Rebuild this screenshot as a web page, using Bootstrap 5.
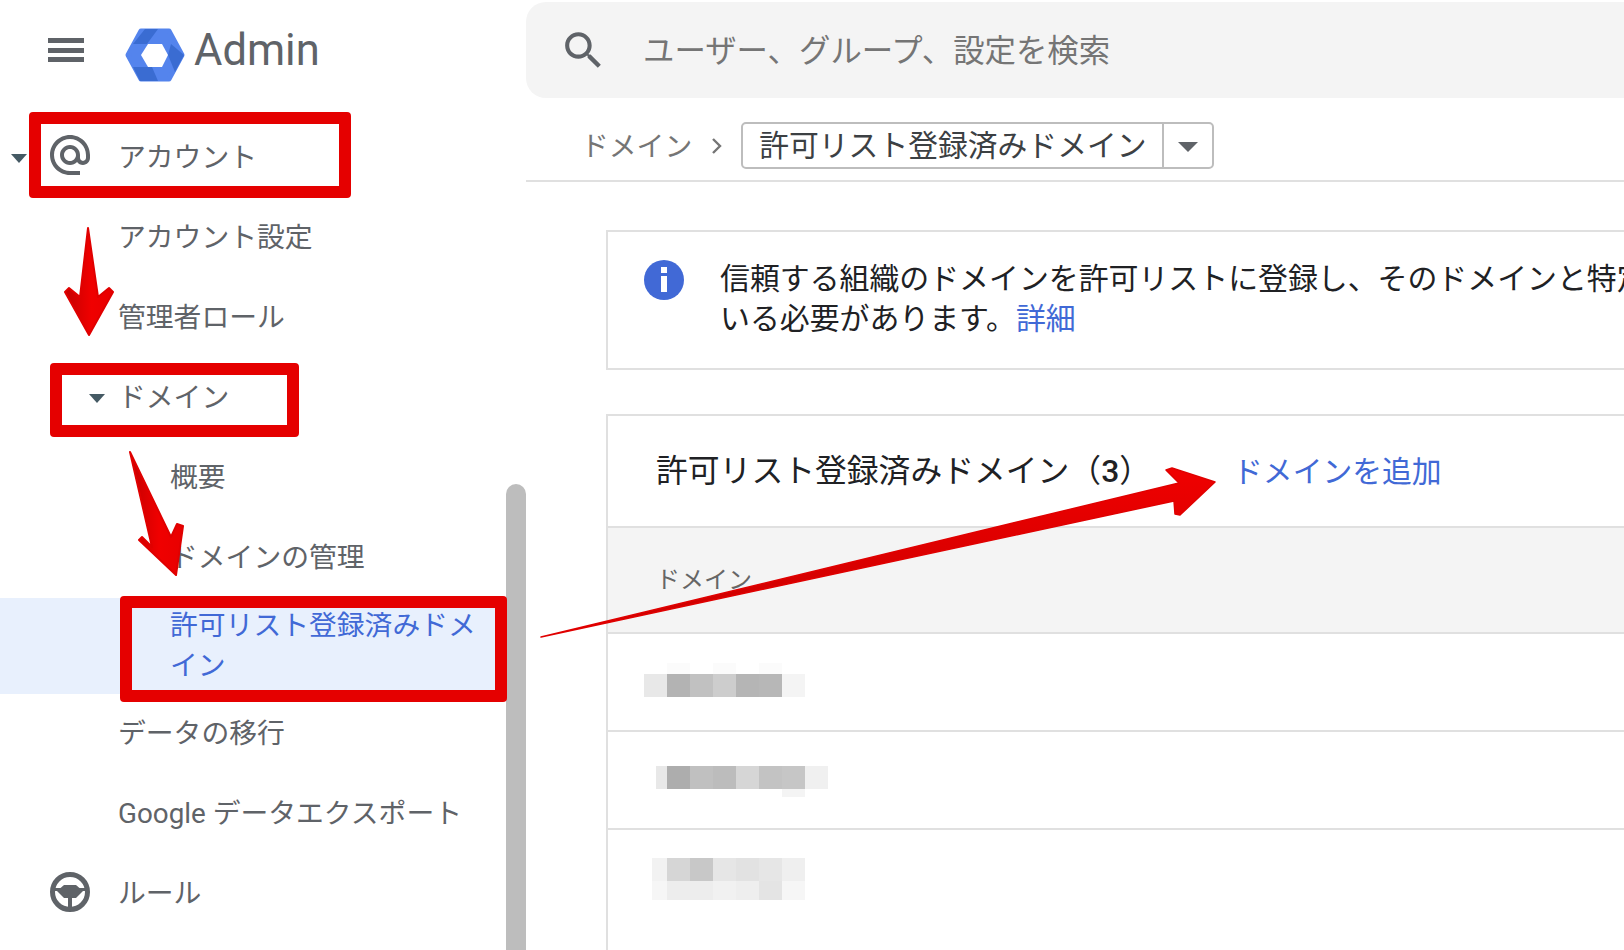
<!DOCTYPE html>
<html lang="ja">
<head>
<meta charset="utf-8">
<title>Admin</title>
<link href="https://cdn.jsdelivr.net/npm/bootstrap@5.3.0/dist/css/bootstrap.min.css" rel="stylesheet">
<style>
html,body{height:100%;overflow:hidden;background:#fff}
body{font-family:Roboto,"Noto Sans CJK JP",sans-serif;color:#202124}
.shell{width:1624px;height:950px;overflow:hidden}
.side{width:526px;flex:none;height:950px}
.brand{height:116px;padding-left:48px;padding-bottom:14px}
.burger{width:36px;height:24px;display:flex;flex-direction:column;justify-content:space-between;margin-right:41px;margin-top:-2px}
.burger i{display:block;height:5px;background:#5f6368}
.brand-logo{margin-top:8px}
.brand-name{font-size:43.5px;color:#5f6368;line-height:1;margin-left:9px}
.menu-row{height:80px;font-size:27.8px;color:#5f6368;display:flex;align-items:center;padding-left:118px;padding-top:3px;white-space:nowrap}
.menu-row.sub{padding-left:170px}
.menu-row.gapped{height:82px;padding-bottom:2px}
.menu-row.short{height:78px;padding-bottom:2px}
.menu-row.active-row{height:96px;background:#e8f0fd;color:#4169d6;line-height:40px;white-space:normal;padding-right:30px;padding-top:0;padding-bottom:1px}
.row-ico{width:48px;height:48px;position:absolute;left:46px;fill:#5f6368}
.caret-a{position:absolute;width:0;height:0;border-left:8.5px solid transparent;border-right:8.5px solid transparent;border-top:9px solid #455a64}
.thumb{position:absolute;left:506px;top:484px;width:20px;height:466px;background:#bdbdbd;border-radius:10px 10px 0 0}
.mainp{width:1098px;flex:none}
.searchbar{height:96px;margin-top:2px;background:#f4f4f4;border-radius:20px 0 0 20px;padding-left:33px;color:#757575;font-size:31.4px}
.search-text{margin-top:3px}
.search-ico{width:49px;height:49px;fill:#5f6368;margin-right:35px;flex:none}
.crumbbar{height:84px;border-bottom:2px solid #e0e0e0;padding:12px 0 0 55px;font-size:27.8px;color:#757575}
.crumb-text{margin-top:3px}
.chev{width:12px;height:18px;margin:2px 18px 0 19px;flex:none}
.picker{height:47px;border:2px solid #bdbdbd;border-radius:5px;color:#3c4043;font-size:29.8px;display:flex;align-items:center;width:473px}
.picker-label{width:421px;padding:2px 0 0 16px;height:100%;display:flex;align-items:center;border-right:2px solid #bdbdbd;white-space:nowrap}
.picker-caret{width:0;height:0;border-left:10px solid transparent;border-right:10px solid transparent;border-top:10px solid #5f6368;margin:4px 0 0 14px}
.panel{margin-left:80px;width:1100px;border:2px solid #e0e0e0;border-radius:0;background:#fff}
.info-panel{margin-top:48px;height:140px;display:flex;padding:28px 0 0 36px}
.info-dot{width:40px;height:40px;border-radius:50%;background:#4169d6;flex:none;margin-right:36px}
.info-text{font-size:29.9px;line-height:40px;color:#202124;white-space:nowrap;margin-top:-1px}
.lnk{color:#4169d6;text-decoration:none}
.list-panel{margin-top:44px;border-bottom:0;height:560px}
.list-head{height:112px;padding:2px 0 0 48px;font-size:29.8px;border-bottom:2px solid #e0e0e0;white-space:nowrap}
.list-head .lnk{margin-left:82px}
.list-title{color:#202124;font-size:31.8px}
.list-count{font-weight:500}
.col-head{height:106px;background:#f4f4f4;border-bottom:2px solid #e0e0e0;padding:36px 0 0 48px;font-size:24px;color:#666;line-height:32px}
.data-row{height:98px;border-bottom:2px solid #e0e0e0;position:relative}
.data-row:last-child{border-bottom:0}
.mosaic{position:absolute;left:0;top:0;width:300px;height:98px}
.marks{position:absolute;left:0;top:0;width:1624px;height:950px;pointer-events:none}
.redbox{position:absolute;border:12px solid #e50000;border-radius:4px}
.rb1{left:29px;top:112px;width:322px;height:86px}
.rb2{left:50px;top:363px;width:249px;height:74px}
.rb3{left:120px;top:596px;width:387px;height:106px}
</style>
</head>
<body>
<div class="shell d-flex position-relative">
  <aside class="side position-relative">
    <div class="brand d-flex align-items-center">
      <div class="burger"><i></i><i></i><i></i></div>
      <svg class="brand-logo" width="60" height="54" viewBox="0 0 60 54" aria-hidden="true">
        <polygon points="3,27 16,3 44,3 57,27 44,51 16,51" fill="#5484ed" stroke="#5484ed" stroke-width="5" stroke-linejoin="round"/>
        <polygon points="8,16 20,1 33,1 22,16" fill="#3a6cd2"/>
        <polygon points="43,27 46,16 59,27 50,44" fill="#3a6cd2"/>
        <polygon points="8,39 27,39 33,53 15,53" fill="#3a6cd2"/>
        <polygon points="16,27 23,16 37,16 43,27 37,39 23,39" fill="#fff"/>
      </svg>
      <span class="brand-name">Admin</span>
    </div>
    <nav class="nav flex-column flex-nowrap">
      <div class="menu-row position-relative">
        <span class="caret-a" style="left:11px;top:38px"></span>
        <svg class="row-ico" viewBox="0 0 24 24" style="top:15px" aria-hidden="true"><path d="M12 2C6.48 2 2 6.48 2 12s4.48 10 10 10h5v-2h-5c-4.34 0-8-3.66-8-8s3.66-8 8-8 8 3.66 8 8v1.43c0 .79-.71 1.57-1.5 1.57s-1.5-.78-1.5-1.57V12c0-2.76-2.24-5-5-5s-5 2.24-5 5 2.24 5 5 5c1.38 0 2.64-.56 3.54-1.47.65.89 1.77 1.47 2.96 1.47 1.97 0 3.5-1.6 3.5-3.57V12c0-5.52-4.48-10-10-10zm0 13c-1.66 0-3-1.34-3-3s1.34-3 3-3 3 1.34 3 3-1.34 3-3 3z"/></svg>
        アカウント
      </div>
      <div class="menu-row">アカウント設定</div>
      <div class="menu-row">管理者ロール</div>
      <div class="menu-row position-relative">
        <span class="caret-a" style="left:89px;top:38px"></span>
        ドメイン
      </div>
      <div class="menu-row sub">概要</div>
      <div class="menu-row sub gapped">ドメインの管理</div>
      <div class="menu-row sub active-row">許可リスト登録済みドメイン</div>
      <div class="menu-row short">データの移行</div>
      <div class="menu-row">Google データエクスポート</div>
      <div class="menu-row position-relative">
        <svg class="row-ico" viewBox="0 0 48 48" style="top:16px" aria-hidden="true">
          <circle cx="24" cy="24" r="17.5" fill="none" stroke="#5f6368" stroke-width="5"/>
          <rect x="8" y="20" width="32" height="3" fill="#5f6368"/>
          <polygon points="18,17 30,17 37,23 30,30 18,30 11,23" fill="#5f6368"/>
          <rect x="22" y="28" width="4" height="12" fill="#5f6368"/>
        </svg>
        ルール
      </div>
    </nav>
    <div class="thumb"></div>
  </aside>
  <main class="mainp">
    <div class="searchbar d-flex align-items-center">
      <svg class="search-ico" viewBox="0 0 24 24" aria-hidden="true"><path d="M15.5 14h-.79l-.28-.27C15.41 12.59 16 11.11 16 9.5 16 5.91 13.09 3 9.5 3S3 5.91 3 9.5 5.91 16 9.5 16c1.61 0 3.09-.59 4.23-1.57l.27.28v.79l5 4.99L20.49 19l-4.99-5zm-6 0C7.01 14 5 11.99 5 9.5S7.01 5 9.5 5 14 7.01 14 9.5 11.99 14 9.5 14z"/></svg>
      <span class="search-text">ユーザー、グループ、設定を検索</span>
    </div>
    <div class="crumbbar d-flex align-items-center">
      <span class="crumb-text">ドメイン</span>
      <svg class="chev" viewBox="0 0 12 18" aria-hidden="true"><path d="M2 2l7 7-7 7" fill="none" stroke="#757575" stroke-width="2.4"/></svg>
      <div class="picker"><span class="picker-label">許可リスト登録済みドメイン</span><span class="picker-caret"></span></div>
    </div>
    <section class="panel info-panel">
      <div class="info-dot d-flex align-items-center justify-content-center">
        <svg width="8" height="26" viewBox="0 0 8 26" aria-hidden="true"><rect x="1" y="0" width="6" height="6" fill="#fff"/><rect x="1" y="9" width="6" height="16" fill="#fff"/></svg>
      </div>
      <div class="info-text">信頼する組織のドメインを許可リストに登録し、そのドメインと特定<br>いる必要があります。<a class="lnk" href="#">詳細</a></div>
    </section>
    <section class="panel list-panel">
      <div class="list-head d-flex align-items-center">
        <span class="list-title">許可リスト登録済みドメイン（<span class="list-count">3</span>）</span>
        <a class="lnk" href="#">ドメインを追加</a>
      </div>
      <div class="col-head">ドメイン</div>
      <div class="data-row">
        <svg class="mosaic" viewBox="0 0 300 98" aria-hidden="true">
          <g transform="translate(-608,-634)">
          <rect x="667" y="663" width="23" height="11" fill="#fbfbfb"/><rect x="713" y="663" width="23" height="11" fill="#fbfbfb"/><rect x="759" y="663" width="23" height="11" fill="#fbfbfb"/>
          <rect x="644" y="674" width="23" height="23" fill="#e8e8e8"/><rect x="667" y="674" width="23" height="23" fill="#b3b3b3"/><rect x="690" y="674" width="23" height="23" fill="#c1c1c1"/><rect x="713" y="674" width="23" height="23" fill="#cdcdcd"/><rect x="736" y="674" width="23" height="23" fill="#b5b5b5"/><rect x="759" y="674" width="23" height="23" fill="#b7b7b7"/><rect x="782" y="674" width="23" height="23" fill="#f4f4f4"/>
          </g>
        </svg>
      </div>
      <div class="data-row">
        <svg class="mosaic" viewBox="0 0 300 98" aria-hidden="true">
          <g transform="translate(-608,-732)">
          <rect x="656" y="766" width="11" height="23" fill="#e8e8e8"/><rect x="667" y="766" width="23" height="23" fill="#adadad"/><rect x="690" y="766" width="23" height="23" fill="#c0c0c0"/><rect x="713" y="766" width="23" height="23" fill="#bcbcbc"/><rect x="736" y="766" width="23" height="23" fill="#d6d6d6"/><rect x="759" y="766" width="23" height="23" fill="#c3c3c3"/><rect x="782" y="766" width="23" height="23" fill="#c6c6c6"/><rect x="805" y="766" width="23" height="23" fill="#f0f0f0"/><rect x="782" y="789" width="23" height="8" fill="#f4f4f4"/>
          </g>
        </svg>
      </div>
      <div class="data-row">
        <svg class="mosaic" viewBox="0 0 300 98" aria-hidden="true">
          <g transform="translate(-608,-830)">
          <rect x="652" y="858" width="15" height="23" fill="#f2f2f2"/><rect x="667" y="858" width="23" height="23" fill="#d6d6d6"/><rect x="690" y="858" width="23" height="23" fill="#c8c8c8"/><rect x="713" y="858" width="23" height="23" fill="#e6e6e6"/><rect x="736" y="858" width="23" height="23" fill="#e2e2e2"/><rect x="759" y="858" width="23" height="23" fill="#e6e6e6"/><rect x="782" y="858" width="23" height="23" fill="#efefef"/>
          <rect x="652" y="881" width="15" height="19" fill="#f6f6f6"/><rect x="667" y="881" width="46" height="19" fill="#ededed"/><rect x="713" y="881" width="23" height="19" fill="#f1f1f1"/><rect x="736" y="881" width="23" height="19" fill="#eeeeee"/><rect x="759" y="881" width="23" height="19" fill="#e4e4e4"/><rect x="782" y="881" width="23" height="19" fill="#f6f6f6"/>
          </g>
        </svg>
      </div>
    </section>
  </main>
  <div class="redbox rb1"></div>
  <div class="redbox rb2"></div>
  <div class="redbox rb3"></div>
  <svg class="marks" viewBox="0 0 1624 950" aria-hidden="true">
    <defs>
      <linearGradient id="arrowred" x1="0" y1="0" x2="1" y2="0"><stop offset="0" stop-color="#c40000"/><stop offset="0.55" stop-color="#f00000"/><stop offset="1" stop-color="#e80000"/></linearGradient>
      <linearGradient id="arrowred3" x1="0" y1="0" x2="0" y2="1"><stop offset="0" stop-color="#f00000"/><stop offset="1" stop-color="#c80000"/></linearGradient>
    </defs>
    <g stroke-linejoin="round">
      <polygon points="88,228 98,297 109,288 113,292 89,335 65,292 69,288 80,297" fill="url(#arrowred)" stroke="#e00000" stroke-width="2"/>
      <polygon points="130,452 171,537 177,524 183,526 176,575 139,540 142,537 152,547" fill="url(#arrowred)" stroke="#e00000" stroke-width="2"/>
      <polygon points="541,637 1179,483 1166,470 1172,468 1215,482 1180,515 1175,514 1174,501" fill="url(#arrowred3)" stroke="#e00000" stroke-width="1.5"/>
    </g>
  </svg>
</div>
<script src="https://cdn.jsdelivr.net/npm/bootstrap@5.3.0/dist/js/bootstrap.bundle.min.js"></script>
</body>
</html>
